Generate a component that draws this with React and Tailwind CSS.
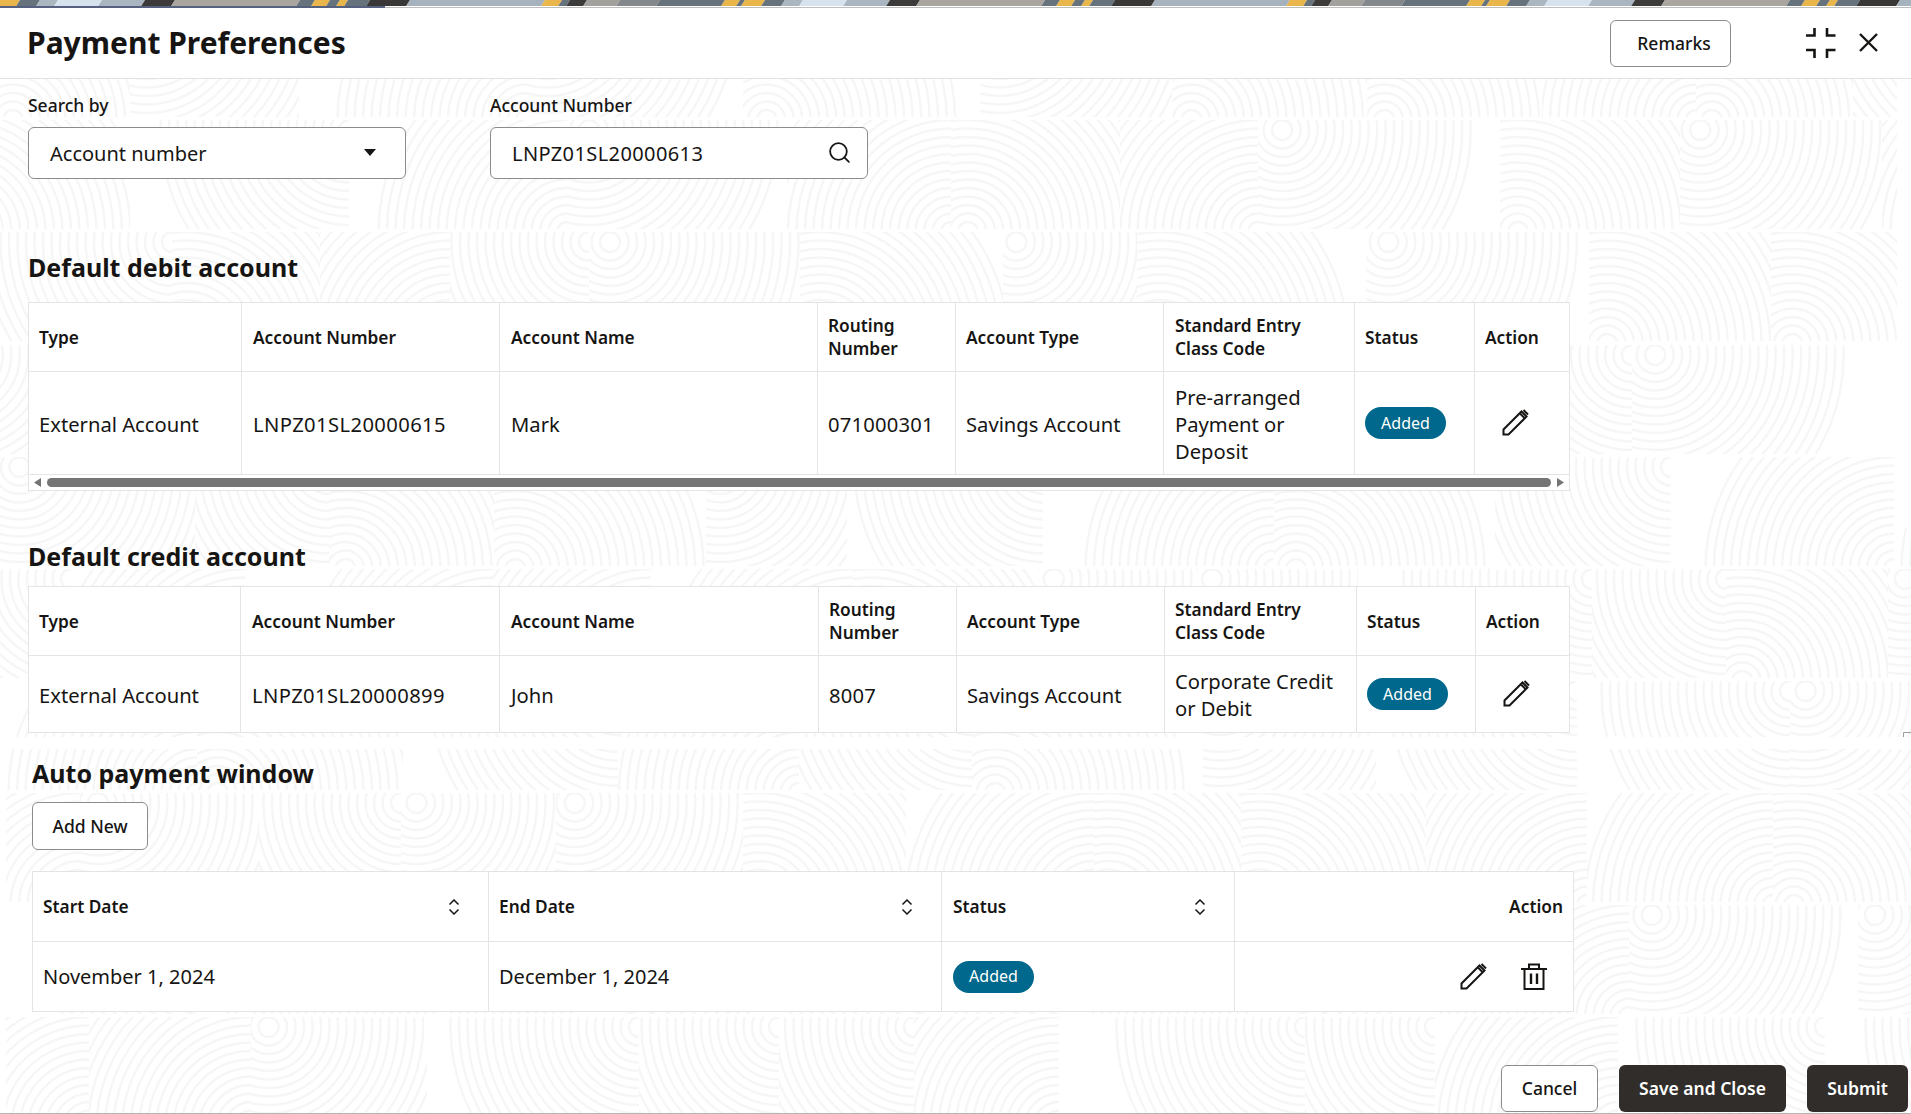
import React from 'react';
import { Search } from 'lucide-react';

const stripe = [
  [0, 15, '#e8b64a'], [15, 20, '#66737d'], [20, 40, '#e8b64a'], [40, 60, '#66737d'], [60, 78, '#aab6c0'],
  [78, 122, '#d6e2ee'], [122, 165, '#a9b5c0'], [165, 195, '#3d3b39'], [195, 320, '#aaa69f'],
  [320, 335, '#66737d'], [335, 350, '#e8b64a'], [350, 360, '#66737d'], [360, 368, '#e8b64a'],
  [368, 390, '#66737d'], [390, 430, '#3a3836'], [430, 565, '#a6b2bd'], [565, 582, '#e8b64a'],
  [582, 590, '#66737d'], [590, 607, '#3d3b39'], [607, 640, '#a3a19e'], [640, 680, '#84878c'], [680, 745, '#66737d'],
];

function TopStrip() {
  const polys = [];
  for (let p = -1; p < 4; p++) {
    stripe.forEach(([a, b, c], i) => {
      const x0 = a + p * 745 - 25;
      const x1 = b + p * 745 - 25;
      polys.push(<polygon key={p + '-' + i} points={`${x0 + 5},0 ${x1 + 5},0 ${x1},8 ${x0},8`} fill={c} />);
    });
  }
  return (
    <svg width="1911" height="8" className="block shrink-0">
      {polys}
      <rect x="0" y="6" width="385" height="2" fill="#56607f" />
      <rect x="385" y="6" width="1526" height="1" fill="#ffffff" />
      <rect x="385" y="7" width="1526" height="1" fill="#bdbdbd" />
    </svg>
  );
}

// fingerprint style texture behind the page
function rand(seed) {
  const x = Math.sin(seed * 127.1) * 43758.5453;
  return x - Math.floor(x);
}

function Texture() {
  const cells = [];
  const rows = [8, 120, 232, 345, 457, 569, 681, 793, 905, 1017];
  rows.forEach((y, r) => {
    let x = r % 2 ? -60 : 0;
    let c = 0;
    while (x < 1911) {
      const w = 130 + Math.floor(rand(r * 17 + c) * 120);
      const s = r * 31 + c * 7;
      const cx = w * (rand(s + 1) > 0.5 ? 1 : 0.1);
      const cy = rand(s + 2) > 0.45 ? 112 : 10;
      const rings = [];
      for (let k = 0; k < 22; k++) {
        rings.push(<circle key={k} cx={cx} cy={cy} r={10 + k * 8.5} />);
      }
      cells.push(
        <svg key={r + '-' + c} x={x} y={y} width={w} height="109">
          <g fill="none" stroke="#f6f6f6" strokeWidth="2.4">{rings}</g>
        </svg>
      );
      x += w;
      c++;
    }
  });
  return (
    <svg width="1911" height="1114" className="absolute left-0 top-0">
      {cells}
      <rect x="1897" y="79" width="14" height="449" fill="#ffffff" />
      <rect x="0" y="737" width="1911" height="12" fill="#ffffff" />
      <rect x="0" y="749" width="6" height="365" fill="#ffffff" />
      <path d="M1903.5 737v-4.5h8" fill="none" stroke="#9a9a9a" strokeWidth="1" />
    </svg>
  );
}

function Pencil({ size = 27 }) {
  return (
    <svg width={size} height={size} viewBox="0 0 27 27" fill="none" stroke="#161513" strokeWidth="2">
      <path d="M1.5 25.5V20.5L19.5 2.5L24.5 7.5L6.5 25.5Z" />
      <path d="M18 4.5L22.5 9" />
      <path d="M21.5 1L26 5.5" />
    </svg>
  );
}

function Trash() {
  return (
    <svg width="26" height="27" viewBox="0 0 26 27" fill="none" stroke="#161513" strokeWidth="2">
      <path d="M0 6H26" />
      <path d="M8 6V1.5H18V6" />
      <path d="M3.5 6V26H22.5V6" />
      <path d="M10 10.5V21M16 10.5V21" strokeWidth="2.4" />
    </svg>
  );
}

function SortIcon() {
  return (
    <svg width="12" height="16" viewBox="0 0 12 16" fill="none" stroke="#161513" strokeWidth="1.5">
      <path d="M1.5 5.5L6 1L10.5 5.5" />
      <path d="M1.5 10.5L6 15L10.5 10.5" />
    </svg>
  );
}

function Badge() {
  return (
    <span className="inline-flex items-center justify-center w-[81px] h-[32px] rounded-full bg-[#00688c] text-white text-[16px]">
      Added
    </span>
  );
}

const th = 'border border-[#e4e4e4] px-[10px] text-left font-semibold text-[17.3px] leading-[23px]';
const td = 'border border-[#e4e4e4] px-[10px] text-left text-[20.2px] leading-[27px]';
const tdText = td + ' pt-[2px]';

function AccountTable({ widths, row, rowHeight, scroll, className }) {
  return (
    <div className="bg-white w-fit">
      <table
        className={'table-fixed border-collapse [&_td:nth-child(2)]:pl-[11px] [&_th:nth-child(2)]:pl-[11px] [&_td:nth-child(3)]:pl-[11px] [&_th:nth-child(3)]:pl-[11px] ' + (className || '')}
        style={{ width: widths.reduce((a, b) => a + b, 0) }}
      >
        <colgroup>
          {widths.map((w, i) => <col key={i} style={{ width: w }} />)}
        </colgroup>
        <thead>
          <tr className="h-[69px]">
            <th className={th}>Type</th>
            <th className={th}>Account Number</th>
            <th className={th}>Account Name</th>
            <th className={th}>Routing<br />Number</th>
            <th className={th}>Account Type</th>
            <th className={th}>Standard Entry<br />Class Code</th>
            <th className={th}>Status</th>
            <th className={th}>Action</th>
          </tr>
        </thead>
        <tbody>
          <tr className={rowHeight}>
            <td className={tdText}>External Account</td>
            <td className={tdText + ' tracking-[0.4px]'}>{row.number}</td>
            <td className={tdText}>{row.name}</td>
            <td className={tdText + ' tracking-[0.2px]'}>{row.routing}</td>
            <td className={tdText}>Savings Account</td>
            <td className={tdText}>{row.code}</td>
            <td className={td}><Badge /></td>
            <td className={td}><div className="flex pl-[17px] -mt-[2px]"><Pencil /></div></td>
          </tr>
        </tbody>
      </table>
      {scroll && (
        <div className="flex items-center h-[16px] border border-t-0 border-[#e4e4e4] px-[5px] gap-[6px]">
          <svg width="7" height="9" viewBox="0 0 7 9" className="shrink-0"><path d="M7 0V9L0 4.5Z" fill="#757575" /></svg>
          <div className="flex-1 h-[9px] rounded-full bg-[#757575]" />
          <svg width="7" height="9" viewBox="0 0 7 9" className="shrink-0"><path d="M0 0V9L7 4.5Z" fill="#757575" /></svg>
        </div>
      )}
    </div>
  );
}

function SortHead({ label }) {
  return (
    <th className={th}>
      <div className="flex items-center justify-between pr-[18px]">
        <span>{label}</span>
        <SortIcon />
      </div>
    </th>
  );
}

export default function App() {
  return (
    <div className="relative w-[1911px] h-[1114px] overflow-hidden bg-white text-[#161513] font-['Noto_Sans',sans-serif]">
      <Texture />
      <div className="relative flex flex-col h-full">
        <TopStrip />
        <header className="flex items-center justify-between h-[71px] bg-white border-b border-[#e2e2e2] pl-[27px] pr-[33px] shrink-0">
          <h1 className="text-[30px] font-bold leading-[40px]">Payment Preferences</h1>
          <div className="flex items-center">
            <button className="w-[121px] h-[47px] rounded-[6px] border border-[#8c8c8c] bg-white text-[17.5px] font-medium pl-[7px] mr-[75px]">Remarks</button>
            <svg width="30" height="30" viewBox="0 0 30 30" fill="none" stroke="#161513" strokeWidth="2.6" className="mr-[23px]">
              <path d="M0 7.5H8.5V0M21 0V7.5H29.5M0 22H8.5V30M21 30V22H29.5" />
            </svg>
            <svg width="19" height="19" viewBox="0 0 19 19" fill="none" stroke="#161513" strokeWidth="2.4" className="-mt-[2px]">
              <path d="M1 1L18 18M18 1L1 18" />
            </svg>
          </div>
        </header>

        <div className="flex gap-[84px] pl-[28px] pt-[14px] shrink-0">
          <div>
            <label className="block text-[17.5px] leading-[24px] font-medium mb-[10px]">Search by</label>
            <div className="flex items-center justify-between w-[378px] h-[52px] rounded-[6px] border border-[#8c8c8c] bg-white pl-[21px] pr-[29px]">
              <span className="text-[20px] pt-[2px]">Account number</span>
              <svg width="12" height="7" viewBox="0 0 12 7" className="-mt-[2px]"><path d="M0 0H12L6 7Z" fill="#161513" /></svg>
            </div>
          </div>
          <div>
            <label className="block text-[17.5px] leading-[24px] font-medium mb-[10px]">Account Number</label>
            <div className="flex items-center justify-between w-[378px] h-[52px] rounded-[6px] border border-[#8c8c8c] bg-white pl-[21px] pr-[15px]">
              <span className="text-[20px] tracking-[0.4px] pt-[2px]">LNPZ01SL20000613</span>
              <Search size={25} strokeWidth={1.7} className="-mt-[2px]" />
            </div>
          </div>
        </div>

        <div className="pl-[28px] pt-[72px] shrink-0">
          <h2 className="text-[25px] font-bold leading-[32px] mb-[19px]">Default debit account</h2>
          <AccountTable
            className="[&_td:nth-child(6)]:pl-[11px] [&_th:nth-child(6)]:pl-[11px]"
            widths={[213, 258, 318, 138, 208, 191, 120, 95]}
            rowHeight="h-[103px]"
            scroll
            row={{ number: 'LNPZ01SL20000615', name: 'Mark', routing: '071000301', code: <>Pre-arranged<br />Payment or<br />Deposit</> }}
          />
        </div>

        <div className="pl-[28px] pt-[49px] shrink-0">
          <h2 className="text-[25px] font-bold leading-[32px] mb-[14px]">Default credit account</h2>
          <AccountTable
            widths={[212, 259, 319, 138, 208, 192, 119, 94]}
            rowHeight="h-[77px]"
            row={{ number: 'LNPZ01SL20000899', name: 'John', routing: '8007', code: <>Corporate Credit<br />or Debit</> }}
          />
        </div>

        <div className="pl-[32px] pt-[24px] shrink-0">
          <h2 className="text-[25px] font-bold leading-[32px] mb-[13px]">Auto payment window</h2>
          <button className="block w-[116px] h-[48px] rounded-[6px] border border-[#8c8c8c] bg-white text-[17.5px] font-medium mb-[21px]">Add New</button>
          <table className="table-fixed border-collapse bg-white w-[1541px] [&_td:nth-child(3)]:pl-[11px] [&_th:nth-child(3)]:pl-[11px]">
            <colgroup>
              <col className="w-[456px]" />
              <col className="w-[453px]" />
              <col className="w-[293px]" />
              <col className="w-[339px]" />
            </colgroup>
            <thead>
              <tr className="h-[70px]">
                <SortHead label="Start Date" />
                <SortHead label="End Date" />
                <SortHead label="Status" />
                <th className={th + ' text-right'}>Action</th>
              </tr>
            </thead>
            <tbody>
              <tr className="h-[70px]">
                <td className={td + ' text-[20px]'}>November 1, 2024</td>
                <td className={td + ' text-[20px]'}>December 1, 2024</td>
                <td className={td}><Badge /></td>
                <td className={td}>
                  <div className="flex items-center justify-end gap-[34px] pr-[16px]">
                    <Pencil />
                    <Trash />
                  </div>
                </td>
              </tr>
            </tbody>
          </table>
        </div>

        <div className="flex justify-end gap-[21px] pr-[3px] pt-[53px] shrink-0">
          <button className="w-[97px] h-[47px] rounded-[6px] border border-[#8c8c8c] bg-white text-[17.5px] font-medium">Cancel</button>
          <button className="w-[167px] h-[47px] rounded-[6px] bg-[#312d2a] text-white text-[17.5px] font-semibold">Save and Close</button>
          <button className="w-[101px] h-[47px] rounded-[6px] bg-[#312d2a] text-white text-[17.5px] font-semibold">Submit</button>
        </div>
        <div className="h-px bg-[#b5b5b5] mt-[1px] shrink-0" />
      </div>
    </div>
  );
}
